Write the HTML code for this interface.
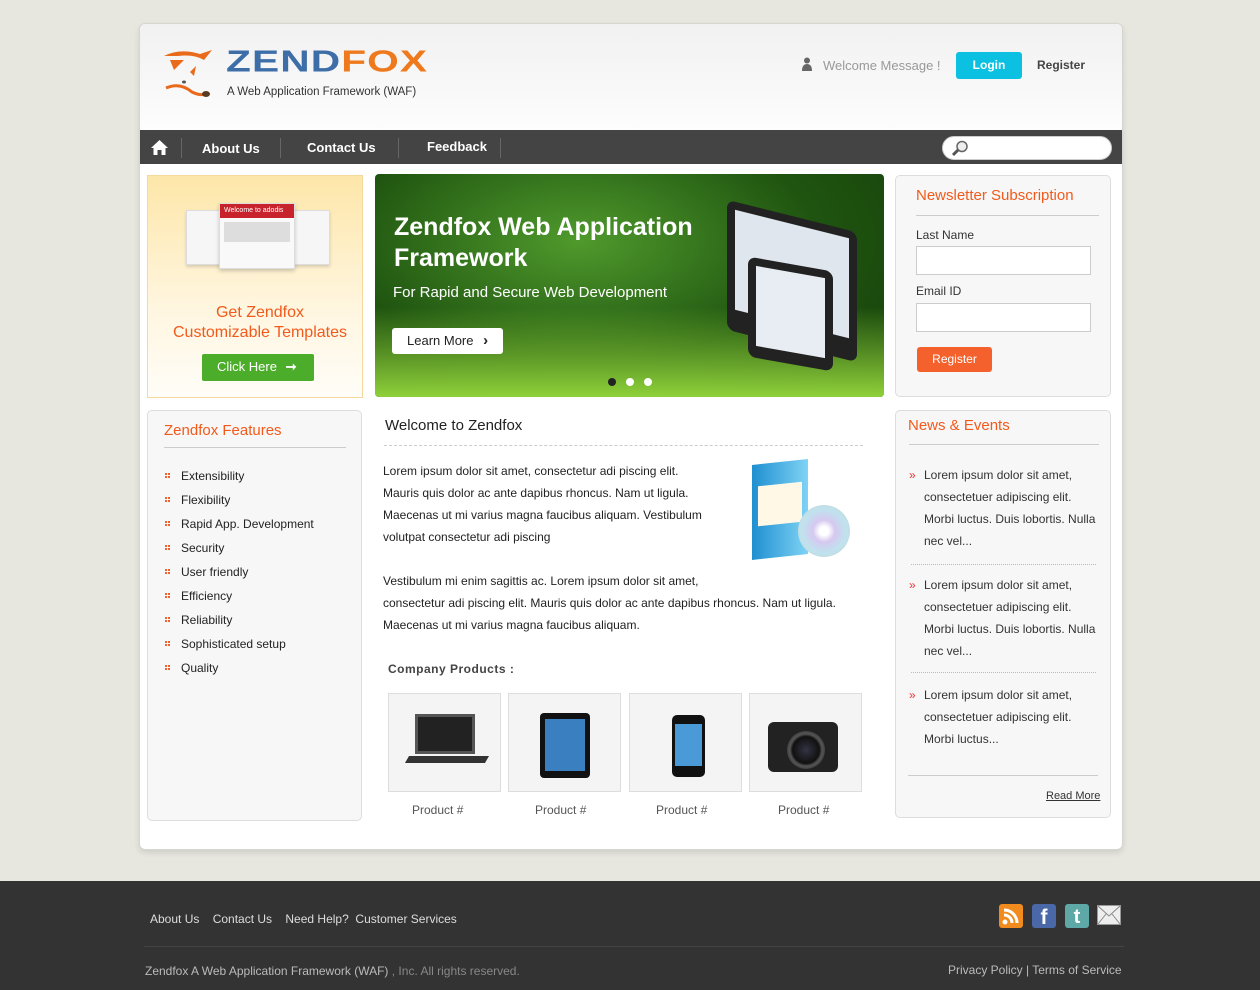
<!DOCTYPE html>
<html><head><meta charset="utf-8"><style>
*{margin:0;padding:0;box-sizing:border-box}
body{width:1260px;height:990px;background:#e7e6df;font-family:"Liberation Sans",Arial,sans-serif;position:relative;overflow:hidden;color:#333}
.abs{position:absolute}
#wrap{left:139px;top:23px;width:984px;height:827px;background:#fff;border:1px solid #d6d6d0;border-radius:6px;overflow:hidden;box-shadow:0 3px 6px rgba(0,0,0,.1)}
#head{left:0;top:0;width:984px;height:106px;background:linear-gradient(#f1f1f1,#fdfdfd)}
#nav{left:0;top:106px;width:984px;height:34px;background:#444}
.nav a{position:absolute;color:#fff;font-size:13px;font-weight:bold;top:10px;text-decoration:none}
.sep{position:absolute;top:8px;width:1px;height:20px;background:#666}
.box{position:absolute;background:#f7f7f7;border:1px solid #ddd;border-radius:5px}
.orange{color:#f25a1c}
.feat li{list-style:none;font-size:12px;color:#222;height:24px;position:relative;padding-left:17px}
.feat li:before{content:"";position:absolute;left:1px;top:4px;width:2px;height:2px;background:#f06030;box-shadow:3px 0 #f06030,0 3px #f06030,3px 3px #f06030}
.news .np{position:absolute;font-size:12px;line-height:22px;color:#333;padding-left:15px;white-space:nowrap}
.news .np:before{content:"»";position:absolute;left:0;top:0;color:#e33}
.dot{border-top:1px dotted #bbb}
.prod{position:absolute;top:693px;width:113px;height:99px;background:#f4f4f4;border:1px solid #ddd}
.pl{position:absolute;top:803px;font-size:12px;color:#555}
input{border:1px solid #ccc;background:#fff}
</style></head><body>
<div id="wrap" class="abs">
 <div id="head" class="abs">
  <svg class="abs" style="left:20px;top:22px" width="60" height="56" viewBox="0 0 60 56">
   <path d="M4 10 Q20 2 40 8 L52 4 L44 14 Q34 8 18 10 Z" fill="#e86a1a"/>
   <path d="M10 14 L24 14 L14 24 Z" fill="#e86a1a"/>
   <path d="M36 20 L34 30 L30 26 Z" fill="#e86a1a"/>
   <ellipse cx="24" cy="36" rx="2" ry="1.5" fill="#555"/>
   <path d="M6 42 Q20 36 32 46 Q40 50 46 48" stroke="#e86a1a" stroke-width="3" fill="none"/>
   <ellipse cx="46" cy="48" rx="4" ry="3" fill="#5a3a20"/>
  </svg>
  <div class="abs" style="left:86px;top:22px;font-size:37px;font-weight:bold;letter-spacing:1px;line-height:1;transform:scale(1.1,.82);transform-origin:top left"><span style="color:#3e6ea8">ZEND</span><span style="color:#ef7a1d">FOX</span></div>
  <div class="abs" style="left:87px;top:62px;font-size:11.5px;color:#333">A Web Application Framework (WAF)</div>
  <svg class="abs" style="left:662px;top:33px" width="10" height="14" viewBox="0 0 10 14"><circle cx="5" cy="3.5" r="3" fill="#666"/><path d="M0 14 Q0 7 5 7 Q10 7 10 14Z" fill="#666"/></svg>
  <div class="abs" style="left:683px;top:34px;font-size:13px;color:#999">Welcome Message !</div>
  <div class="abs" style="left:816px;top:28px;width:66px;height:27px;background:#0bc0e0;border-radius:3px;color:#fff;font-size:12px;font-weight:bold;text-align:center;line-height:27px">Login</div>
  <div class="abs" style="left:897px;top:34px;font-size:12px;font-weight:bold;color:#444">Register</div>
 </div>
 <div id="nav" class="abs nav">
  <svg class="abs" style="left:11px;top:10px" width="17" height="15" viewBox="0 0 17 15"><path d="M8.5 0 L17 8 L14.5 8 L14.5 15 L10.5 15 L10.5 10 L6.5 10 L6.5 15 L2.5 15 L2.5 8 L0 8 Z" fill="#fff"/></svg>
  <div class="sep" style="left:41px"></div>
  <a style="left:62px;top:11px">About Us</a>
  <div class="sep" style="left:140px"></div>
  <a style="left:167px">Contact Us</a>
  <div class="sep" style="left:258px"></div>
  <a style="left:287px;top:9px">Feedback</a>
  <div class="sep" style="left:360px"></div>
  <div class="abs" style="left:802px;top:6px;width:170px;height:24px;background:#fff;border-radius:12px;border:1px solid #ccc"></div>
  <svg class="abs" style="left:811px;top:10px" width="18" height="17" viewBox="0 0 18 17"><circle cx="11" cy="6.5" r="5" fill="#eee" stroke="#666" stroke-width="1.5"/><path d="M7 10 L2 15" stroke="#555" stroke-width="3"/></svg>
 </div>
</div>

<!-- promo -->
<div class="abs" style="left:147px;top:175px;width:216px;height:223px;border:1px solid #f5d99a;background:linear-gradient(#fde6a8,#fff6e0 60%,#fffdf8)"></div>
<div class="abs" style="left:186px;top:210px;width:36px;height:55px;background:#f6f6f6;border:1px solid #ddd;box-shadow:0 2px 3px rgba(0,0,0,.15)"></div>
<div class="abs" style="left:294px;top:210px;width:36px;height:55px;background:#f6f6f6;border:1px solid #ddd;box-shadow:0 2px 3px rgba(0,0,0,.15)"></div>
<div class="abs" style="left:219px;top:203px;width:76px;height:66px;background:#f9f9f9;border:1px solid #ddd;box-shadow:0 2px 4px rgba(0,0,0,.2)"><div style="height:14px;background:#c8232c;color:#fff;font-size:7px;padding:3px 4px">Welcome to adodis</div><div style="margin:4px;height:20px;background:#ddd"></div></div>
<div class="abs orange" style="left:148px;top:303px;width:224px;text-align:center;font-size:16px;line-height:20px">Get Zendfox<br>Customizable Templates</div>
<div class="abs" style="left:202px;top:354px;width:112px;height:27px;background:#4cad2a;border-radius:2px;color:#fff;font-size:13px;line-height:26px;padding-left:15px">Click Here <span style="font-weight:bold;margin-left:5px">➞</span></div>

<!-- slider -->
<div class="abs" style="left:375px;top:174px;width:509px;height:223px;border-radius:4px;background:radial-gradient(ellipse at 40% 30%,#4f9a2c,#1f5410 55%,#153e0a);overflow:hidden">
 <div class="abs" style="left:0;bottom:0;width:509px;height:90px;background:linear-gradient(transparent,#8fd13a)"></div>
 <div class="abs" style="left:352px;top:42px;width:130px;height:130px;background:#222;border-radius:8px;transform:skewY(14deg)"><div style="margin:8px;height:100px;background:#dfe6ee"></div></div>
 <div class="abs" style="left:373px;top:90px;width:85px;height:100px;background:#222;border-radius:8px;transform:skewY(10deg)"><div style="margin:8px;height:80px;background:#e8edf3"></div></div>
 <div class="abs" style="left:19px;top:38px;color:#fff;font-size:25px;font-weight:bold;line-height:31px">Zendfox Web Application<br>Framework</div>
 <div class="abs" style="left:18px;top:110px;color:#fff;font-size:15px">For Rapid and Secure Web Development</div>
 <div class="abs" style="left:17px;top:154px;width:111px;height:26px;background:#fff;border-radius:3px;font-size:13px;color:#222;line-height:26px;padding-left:15px">Learn More <b style="margin-left:6px;font-size:15px">›</b></div>
 <div class="abs" style="left:233px;top:204px;width:8px;height:8px;border-radius:50%;background:#222"></div>
 <div class="abs" style="left:251px;top:204px;width:8px;height:8px;border-radius:50%;background:#fff"></div>
 <div class="abs" style="left:269px;top:204px;width:8px;height:8px;border-radius:50%;background:#fff"></div>
</div>

<!-- newsletter -->
<div class="box" style="left:895px;top:175px;width:216px;height:222px">
 <div class="abs orange" style="left:20px;top:11px;font-size:15px">Newsletter Subscription</div>
 <div class="abs" style="left:20px;top:39px;width:183px;border-top:1px solid #ccc"></div>
 <div class="abs" style="left:20px;top:52px;font-size:12px">Last Name</div>
 <input class="abs" style="left:20px;top:70px;width:175px;height:29px">
 <div class="abs" style="left:20px;top:108px;font-size:12px">Email ID</div>
 <input class="abs" style="left:20px;top:127px;width:175px;height:29px">
 <div class="abs" style="left:21px;top:171px;width:75px;height:25px;background:#f4612c;border-radius:3px;color:#fff;font-size:12px;text-align:center;line-height:25px">Register</div>
</div>

<!-- features -->
<div class="box" style="left:147px;top:410px;width:215px;height:411px">
 <div class="abs orange" style="left:16px;top:11px;font-size:15px">Zendfox Features</div>
 <div class="abs" style="left:16px;top:36px;width:182px;border-top:1px solid #ccc"></div>
 <ul class="feat abs" style="left:16px;top:58px">
  <li>Extensibility</li><li>Flexibility</li><li>Rapid App. Development</li><li>Security</li><li>User friendly</li><li>Efficiency</li><li>Reliability</li><li>Sophisticated setup</li><li>Quality</li>
 </ul>
</div>

<!-- center -->
<div class="abs" style="left:385px;top:417px;font-size:15px;color:#222">Welcome to Zendfox</div>
<div class="abs" style="left:384px;top:445px;width:479px;border-top:1px dashed #ccc"></div>
<div class="abs" style="left:383px;top:460px;font-size:12px;line-height:22px;color:#222;white-space:nowrap">Lorem ipsum dolor sit amet, consectetur adi piscing elit.<br>Mauris quis dolor ac ante dapibus rhoncus. Nam ut ligula.<br>Maecenas ut mi varius magna faucibus aliquam. Vestibulum<br>volutpat consectetur adi piscing</div>
<div class="abs" style="left:752px;top:462px;width:56px;height:95px;background:linear-gradient(90deg,#1e8fd0,#7fd3f5);transform:skewY(-6deg)"><div style="margin:22px 6px;height:40px;background:#fff8e6"></div></div>
<div class="abs" style="left:798px;top:505px;width:52px;height:52px;border-radius:50%;background:radial-gradient(circle,#fff 12%,#d6c8f0 30%,#bfe3ee 60%,#ccc)"></div>
<div class="abs" style="left:383px;top:570px;font-size:12px;line-height:22px;color:#222;white-space:nowrap">Vestibulum mi enim sagittis ac. Lorem ipsum dolor sit amet,<br>consectetur adi piscing elit. Mauris quis dolor ac ante dapibus rhoncus. Nam ut ligula.<br>Maecenas ut mi varius magna faucibus aliquam.</div>
<div class="abs" style="left:388px;top:662px;font-size:12px;font-weight:bold;color:#444;letter-spacing:.5px">Company Products :</div>
<div class="prod" style="left:388px"><div class="abs" style="left:26px;top:20px;width:60px;height:40px;background:#222;border:3px solid #555"></div><div class="abs" style="left:18px;top:62px;width:80px;height:7px;background:#333;transform:skewX(-30deg)"></div></div>
<div class="prod" style="left:508px"><div class="abs" style="left:31px;top:19px;width:50px;height:65px;background:#111;border-radius:4px"><div style="margin:6px 5px;height:52px;background:#3a7fc0"></div></div></div>
<div class="prod" style="left:629px"><div class="abs" style="left:42px;top:21px;width:33px;height:62px;background:#111;border-radius:5px"><div style="margin:9px 3px;height:42px;background:#4a9ad8"></div></div></div>
<div class="prod" style="left:749px"><div class="abs" style="left:18px;top:28px;width:70px;height:50px;background:#222;border-radius:6px"></div><div class="abs" style="left:37px;top:37px;width:38px;height:38px;border-radius:50%;background:radial-gradient(#334,#111 50%,#555 60%,#111)"></div></div>
<div class="pl" style="left:412px">Product #</div>
<div class="pl" style="left:535px">Product #</div>
<div class="pl" style="left:656px">Product #</div>
<div class="pl" style="left:778px">Product #</div>

<!-- news -->
<div class="box news" style="left:895px;top:410px;width:216px;height:408px">
 <div class="abs orange" style="left:12px;top:6px;font-size:15px">News &amp; Events</div>
 <div class="abs" style="left:13px;top:33px;width:190px;border-top:1px solid #ccc"></div>
 <div class="np" style="left:13px;top:53px">Lorem ipsum dolor sit amet,<br>consectetuer adipiscing elit.<br>Morbi luctus. Duis lobortis. Nulla<br>nec vel...</div>
 <div class="abs dot" style="left:15px;top:153px;width:185px"></div>
 <div class="np" style="left:13px;top:163px">Lorem ipsum dolor sit amet,<br>consectetuer adipiscing elit.<br>Morbi luctus. Duis lobortis. Nulla<br>nec vel...</div>
 <div class="abs dot" style="left:15px;top:261px;width:185px"></div>
 <div class="np" style="left:13px;top:273px">Lorem ipsum dolor sit amet,<br>consectetuer adipiscing elit.<br>Morbi luctus...</div>
 <div class="abs" style="left:12px;top:364px;width:190px;border-top:1px solid #ccc"></div>
 <div class="abs" style="left:150px;top:379px;font-size:11px;color:#333;text-decoration:underline">Read More</div>
</div>

<!-- footer -->
<div class="abs" style="left:0;top:881px;width:1260px;height:109px;background:#333">
 <div class="abs" style="left:150px;top:31px;font-size:12px;color:#ddd">About Us &nbsp;&nbsp; Contact Us &nbsp;&nbsp; Need Help? &nbsp;Customer Services</div>
 <div class="abs" style="left:999px;top:23px;width:24px;height:24px;background:#f18b1e;border-radius:3px"><svg width="24" height="24"><circle cx="6" cy="18" r="2.5" fill="#fff"/><path d="M5 11 A8 8 0 0 1 13 19 M5 6 A13 13 0 0 1 18 19" stroke="#fff" stroke-width="3" fill="none"/></svg></div>
 <div class="abs" style="left:1032px;top:23px;width:24px;height:24px;background:#4a67a8;border-radius:3px;color:#fff;font-weight:bold;font-size:21px;text-align:center;line-height:28px;overflow:hidden">f</div>
 <div class="abs" style="left:1065px;top:23px;width:24px;height:24px;background:#5ea8a8;border-radius:3px;color:#fff;font-weight:bold;font-size:20px;text-align:center;line-height:26px">t</div>
 <svg class="abs" style="left:1097px;top:24px" width="24" height="20"><rect x="0.5" y="0.5" width="23" height="19" fill="#eee" stroke="#999"/><path d="M1 1 L12 11 L23 1 M1 19 L9 9 M23 19 L15 9" stroke="#888" fill="none"/></svg>
 <div class="abs" style="left:144px;top:65px;width:980px;border-top:1px solid #444"></div>
 <div class="abs" style="left:145px;top:83px;font-size:12px;color:#bbb">Zendfox A Web Application Framework (WAF) <span style="color:#888">, Inc. All rights reserved.</span></div>
 <div class="abs" style="left:948px;top:82px;font-size:12px;color:#bbb">Privacy Policy | Terms of Service</div>
</div>
</body></html>
